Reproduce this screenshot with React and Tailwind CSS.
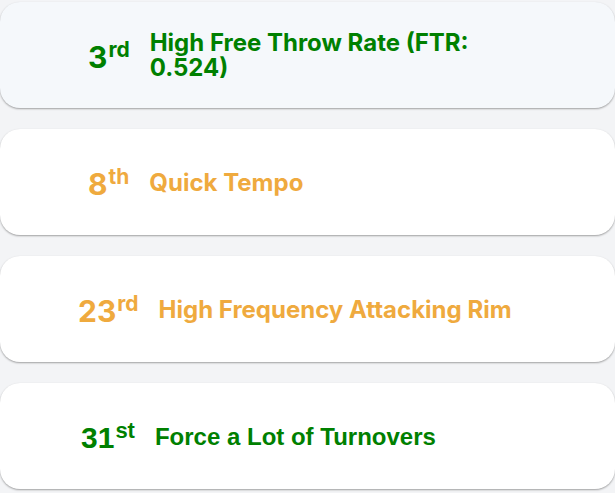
import React from "react";

const items = [
  {
    rank: "3",
    suffix: "rd",
    title: "High Free Throw Rate (FTR: 0.524)",
    color: "text-[#008000]",
    bg: "bg-[#f5f8fb]",
    pad: "pl-[88px]",
    font: "font-['Inter',sans-serif]",
    sup: "text-[21px]",
  },
  {
    rank: "8",
    suffix: "th",
    title: "Quick Tempo",
    color: "text-[#efaa3e]",
    bg: "bg-white",
    pad: "pl-[88px]",
    font: "font-['Inter',sans-serif]",
    sup: "text-[21px]",
  },
  {
    rank: "23",
    suffix: "rd",
    title: "High Frequency Attacking Rim",
    color: "text-[#efaa3e]",
    bg: "bg-white",
    pad: "pl-[78px]",
    font: "font-['Inter',sans-serif]",
    sup: "text-[21px]",
  },
  {
    rank: "31",
    suffix: "st",
    title: "Force a Lot of Turnovers",
    color: "text-[#008000]",
    bg: "bg-white",
    pad: "pl-[81px]",
    font: "font-['Liberation_Sans',Arial,sans-serif]",
    sup: "text-[22px]",
  },
];

export default function App() {
  return (
    <div className="min-h-screen bg-[#f3f4f6] pt-[2px]">
      <div className="flex flex-col gap-[21px]">
        {items.map((it) => (
          <div
            key={it.title}
            className={`h-[106px] rounded-[20px] ${it.bg} shadow-[0_1px_2px_rgba(0,0,0,0.35)] flex items-center ${it.pad} pr-[80px] ${it.font} ${it.color}`}
          >
            {/* rank */}
            <div className="flex-none flex items-start font-bold leading-none">
              <span className="text-[30px] mt-[3px]">{it.rank}</span>
              <span className={`${it.sup} ml-[1px]`}>{it.suffix}</span>
            </div>
            {/* label */}
            <div className="ml-[20px] text-[24px] font-bold leading-[25px]">
              {it.title}
            </div>
          </div>
        ))}
      </div>
    </div>
  );
}
